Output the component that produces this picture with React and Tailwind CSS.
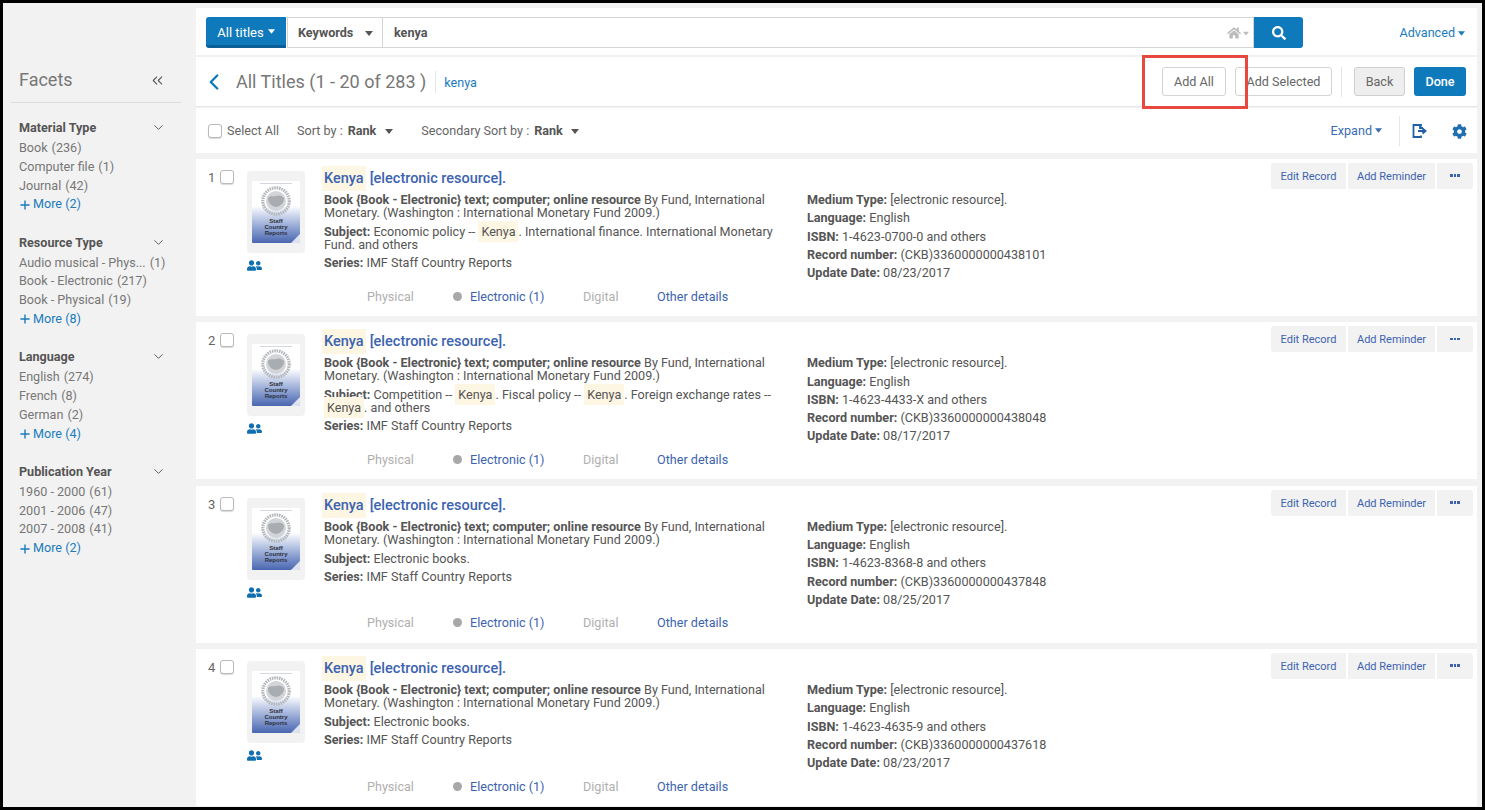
import React from "react";
import { ChevronLeft, ChevronDown, ChevronsLeft, Plus } from "lucide-react";
import { FaHome, FaCog, FaUserFriends, FaSearch } from "react-icons/fa";

const facets = [
  { t: "Material Type", items: [["Book", 236], ["Computer file", 1], ["Journal", 42]], more: 2 },
  { t: "Resource Type", items: [["Audio musical - Phys...", 1], ["Book - Electronic", 217], ["Book - Physical", 19]], more: 8 },
  { t: "Language", items: [["English", 274], ["French", 8], ["German", 2]], more: 4 },
  { t: "Publication Year", items: [["1960 - 2000", 61], ["2001 - 2006", 47], ["2007 - 2008", 41]], more: 2 },
];

const K = () => (
  <span className="bg-[#fdf6e3] px-[3px] py-[3px]">Kenya</span>
);

const records = [
  {
    n: 1,
    subject: (<>Economic policy -- <K />. International finance. International Monetary Fund. and others</>),
    isbn: "1-4623-0700-0",
    rec: "(CKB)3360000000438101",
    date: "08/23/2017",
  },
  {
    n: 2,
    subject: (<>Competition -- <K />. Fiscal policy -- <K />. Foreign exchange rates -- <K />. and others</>),
    isbn: "1-4623-4433-X",
    rec: "(CKB)3360000000438048",
    date: "08/17/2017",
  },
  { n: 3, subject: "Electronic books.", isbn: "1-4623-8368-8", rec: "(CKB)3360000000437848", date: "08/25/2017" },
  { n: 4, subject: "Electronic books.", isbn: "1-4623-4635-9", rec: "(CKB)3360000000437618", date: "08/23/2017" },
];

function Caret({ className = "" }) {
  return (
    <svg width="8" height="5" viewBox="0 0 8 5" className={className}>
      <path d="M0 0h8L4 5z" fill="currentColor" />
    </svg>
  );
}

function Thumb() {
  return (
    <div className="w-[58px] h-[82px] bg-[#f2f2f2] rounded-[4px] flex items-center justify-center">
      <div className="w-[48px] h-[62px] rounded-[1px] bg-gradient-to-b from-white from-40% to-[#4a66b0] flex flex-col items-center pt-[2px] relative overflow-hidden">
        <div className="w-[32px] h-[1px] bg-[#d5d8e2] mb-[2px]" />
        <svg width="30" height="30" viewBox="0 0 30 30" className="shrink-0">
          <circle cx="15" cy="15" r="13.2" fill="none" stroke="#b4b7bb" strokeWidth="3.2" strokeDasharray="1.6 0.8" />
          <circle cx="15" cy="15" r="10" fill="#d2d4d7" />
          <path d="M7 12c3-3 5-1 8-2s5-1 8 2c0 5-3 8-8 9-5-1-8-4-8-9z" fill="#a9acb0" />
        </svg>
        <div className="font-['Liberation_Sans',sans-serif] font-bold text-[6px] leading-[6px] text-center text-[#2b2f3a] mt-[2px]">
          Staff<br />Country<br />Reports
        </div>
        <div className="absolute right-0 bottom-0 w-0 h-0 border-l-[9px] border-l-transparent border-b-[9px] border-b-white/80" />
      </div>
    </div>
  );
}

function Record({ r }) {
  return (
    <div className="h-[157px] bg-white flex pt-[4px] pl-[12px] pr-[4px] relative text-[12.6px] text-[#555]">
      <div className="w-[38px] flex items-start shrink-0 pt-[7px]">
        <span className="w-[12px] text-[13px] leading-[15px] text-[#666]">{r.n}</span>
        <span className="w-[14px] h-[14px] border border-[#b9b9b9] rounded-[3px] bg-white shadow-[0_1px_1px_rgba(0,0,0,0.15)]" />
      </div>
      <div className="w-[78px] shrink-0 pt-[8px] pl-[1px]">
        <Thumb />
        <FaUserFriends className="text-[#0f6fb0] text-[15px] mt-[5px]" />
      </div>
      <div className="w-[483px] shrink-0 flex flex-col pt-[7px] pb-[12.3px]">
        <div className="text-[14.5px] leading-[17px] text-[#3c63b0] font-medium -ml-[2px] mb-[6px]">
          <span className="bg-[#fdf6e3] px-[2px] py-[4px] mr-[4px]">Kenya</span>[electronic resource].
        </div>
        <div className="leading-[13px] w-[455px]">
          <b className="font-bold">Book {"{"}Book - Electronic{"}"} text; computer; online resource</b> By Fund, International Monetary. (Washington : International Monetary Fund 2009.)
        </div>
        <div className="leading-[13px] w-[455px] mt-[6px]">
          <b className="font-bold">Subject:</b> {r.subject}
        </div>
        <div className="leading-[13px] mt-[5px]">
          <b className="font-bold">Series:</b> IMF Staff Country Reports
        </div>
        <div className="mt-auto flex items-center leading-[15px] pl-[43px]">
          <span className="text-[#b0b0b0] w-[86px]">Physical</span>
          <span className="w-[9px] h-[9px] rounded-full bg-[#a8a8a8] mr-[8px]" />
          <span className="text-[#3c63b0] w-[113px]">Electronic (1)</span>
          <span className="text-[#b0b0b0] w-[74px]">Digital</span>
          <span className="text-[#3c63b0]">Other details</span>
        </div>
      </div>
      <div className="flex-1 pt-[28px] leading-[18.25px]">
        <div><b>Medium Type:</b> [electronic resource].</div>
        <div><b>Language:</b> English</div>
        <div><b>ISBN:</b> {r.isbn} and others</div>
        <div><b>Record number:</b> {r.rec}</div>
        <div><b>Update Date:</b> {r.date}</div>
      </div>
      <div className="flex gap-[2px] h-[26px] text-[11px] text-[#3c63b0]">
        <span className="w-[75px] bg-[#f2f2f2] rounded-l-[3px] flex items-center justify-center pt-[2px]">Edit Record</span>
        <span className="w-[87px] bg-[#f2f2f2] flex items-center justify-center pt-[2px]">Add Reminder</span>
        <span className="w-[36px] bg-[#f2f2f2] rounded-r-[3px] flex items-center justify-center gap-[1px] pb-[1px]">
          <i className="w-[2.5px] h-[2.5px] bg-[#3c63b0]" /><i className="w-[2.5px] h-[2.5px] bg-[#3c63b0]" /><i className="w-[2.5px] h-[2.5px] bg-[#3c63b0]" />
        </span>
      </div>
    </div>
  );
}

export default function App() {
  return (
    <div className="w-[1485px] h-[810px] border-[3px] border-black bg-[#f2f2f2] flex overflow-hidden relative font-['Roboto',sans-serif] text-[#555]">
      <aside className="w-[193px] shrink-0 pt-[65px]">
        <div className="ml-[8px] mr-[15px] h-[35px] border-b border-[#dcdcdc] flex items-start justify-between pl-[8px] pr-[15px]">
          <span className="text-[18px] leading-[24px] text-[#777]">Facets</span>
          <ChevronsLeft className="w-[17px] h-[17px] mt-[4px] text-[#555]" strokeWidth={1.5} />
        </div>
        <div className="pl-[16px] pr-[30px] pt-[16px] text-[12.6px]">
          {facets.map((f) => (
            <div key={f.t} className="mb-[19.4px]">
              <div className="flex items-center justify-between h-[19px] mb-[1px]">
                <b className="font-bold text-[#555]">{f.t}</b>
                <ChevronDown className="w-[15px] h-[15px] -mt-[2px] text-[#555]" strokeWidth={1.5} />
              </div>
              {f.items.map(([a, b]) => (
                <div key={a} className="h-[18.8px] leading-[18.8px] text-[#777] whitespace-nowrap">
                  {a}<span className="ml-[4px]">({b})</span>
                </div>
              ))}
              <div className="h-[18.8px] leading-[18.8px] text-[#1a7cbd] flex items-center">
                <Plus className="w-[14px] h-[14px] -ml-[1px]" strokeWidth={2.4} />
                <span className="ml-[1px]">More ({f.more})</span>
              </div>
            </div>
          ))}
        </div>
      </aside>

      <main className="w-[1281px] shrink-0 pt-[5px] flex flex-col">
        <div className="h-[47px] bg-white flex items-start pt-[9px] pl-[10px] pr-[12px] relative">
          <div className="w-[80px] h-[31px] bg-[#0f7abb] border-b-[3px] border-[#0b5f96] rounded-l-[3px] text-white text-[13px] flex items-center justify-center gap-[4px] pt-[3px]">
            All titles <Caret className="mb-[3px] w-[7px]" />
          </div>
          <div className="w-[96px] h-[31px] ml-[1px] border border-[#d4d4d4] flex items-center justify-between pl-[10px] pr-[9px] pt-[1px] text-[12.6px] font-bold text-[#555]">
            Keywords <Caret />
          </div>
          <div className="flex-1 h-[31px] border border-l-0 border-[#d4d4d4] flex items-center justify-between pl-[11px] pr-[4px] pt-[1px] text-[12.6px] font-bold text-[#555]">
            kenya
            <span className="flex items-center gap-[2px] text-[#bdbdbd]"><FaHome className="text-[14px]" /><Caret className="w-[6px]" /></span>
          </div>
          <div className="w-[49px] h-[31px] bg-[#0f7abb] rounded-r-[3px] flex items-center justify-center text-white mr-[162px]">
            <FaSearch className="text-[14px]" />
          </div>
          <div className="absolute top-[16px] right-[12px] text-[12.6px] text-[#1a7cbd] flex items-center gap-[3px]">
            Advanced <Caret className="w-[7px]" />
          </div>
        </div>

        <div className="h-[50px] bg-white mt-[2px] mb-[1px] border-b border-[#e6e6e6] flex items-center pl-[12px] pr-[11px]">
          <ChevronLeft className="w-[26px] h-[26px] -ml-[7px] -mr-[2px] text-[#0f7abb]" strokeWidth={2.2} />
          <span className="ml-[11px] text-[18px] text-[#777]">All Titles (1 - 20 of 283 )</span>
          <span className="ml-[9px] h-[22px] border-l border-[#e6e6e6]" />
          <span className="ml-[8px] text-[12.6px] text-[#1a7cbd] pt-[4px]">kenya</span>
          <div className="ml-auto flex items-center text-[12.6px]">
            <span className="w-[64px] h-[29px] border border-[#d4d4d4] rounded-[3px] flex items-center justify-center pt-[1px] text-[#666]">Add All</span>
            <span className="ml-[9px] w-[97px] h-[29px] border border-[#d4d4d4] rounded-[3px] flex items-center justify-center pt-[1px] text-[#666]">Add Selected</span>
            <span className="ml-[9px] mr-[12px] h-[30px] border-l border-[#e6e6e6]" />
            <span className="w-[51px] h-[29px] bg-[#eeeeee] border border-[#cfcfcf] rounded-[3px] flex items-center justify-center pt-[1px] text-[#666]">Back</span>
            <span className="ml-[9px] w-[52px] h-[29px] bg-[#0f7abb] rounded-[3px] flex items-center justify-center pt-[1px] text-white font-medium">Done</span>
          </div>
        </div>

        <div className="h-[45px] bg-white flex items-center pl-[12px] pr-[10px] text-[12.6px] text-[#666] pt-[1px]">
          <span className="w-[14px] h-[14px] border border-[#b9b9b9] rounded-[3px] bg-white shadow-[0_1px_1px_rgba(0,0,0,0.15)] mr-[5px]" />
          Select All
          <span className="ml-[18px]">Sort by :</span>
          <b className="ml-[5px] font-bold text-[#555]">Rank</b>
          <Caret className="ml-[9px] text-[#555]" />
          <span className="ml-[28px]">Secondary Sort by :</span>
          <b className="ml-[5px] font-bold text-[#555]">Rank</b>
          <Caret className="ml-[8px] text-[#555]" />
          <span className="ml-auto text-[#3a6cb5] flex items-center gap-[3px]">Expand <Caret className="w-[7px]" /></span>
          <span className="ml-[17px] h-[30px] border-l border-[#e6e6e6]" />
          <svg width="16" height="14" viewBox="0 0 16 14" className="ml-[12px] text-[#1f5fa8]">
            <path d="M9 2.5V1H1.5v12H9v-1.5M8 1v3h3M6 7h6.5M10.5 4.5 13.5 7l-3 2.5" fill="none" stroke="currentColor" strokeWidth="1.8" />
          </svg>
          <FaCog className="ml-[24px] text-[#1f6fb0] text-[15px]" />
        </div>

        <div className="mt-[6px] flex flex-col gap-[6.4px]">
          {records.map((r) => <Record key={r.n} r={r} />)}
        </div>
      </main>

      <div className="absolute left-[1139px] top-[52px] w-[106px] h-[54px] border-[3px] border-[#e8493f]" />
    </div>
  );
}
